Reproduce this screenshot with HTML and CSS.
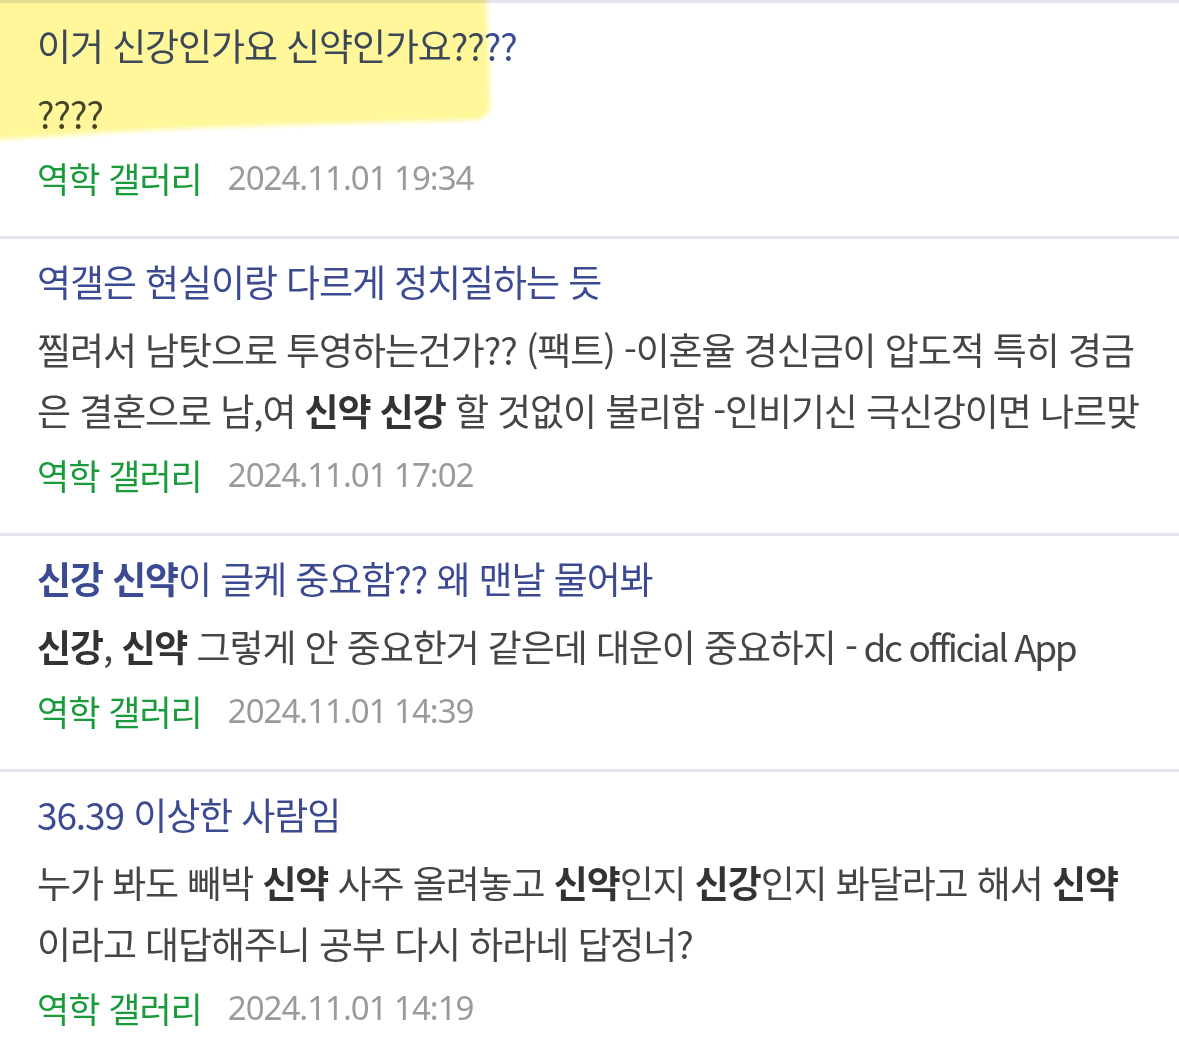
FILE: index.html
```html
<!DOCTYPE html>
<html lang="ko">
<head>
<meta charset="utf-8">
<title>검색 결과</title>
<link rel="stylesheet" href="styles.css">
</head>
<body>
<ul class="list">
  <li class="item">
    <div class="title">이거 신강인가요 신약인가요????</div>
    <div class="body">????</div>
    <div class="meta"><span class="gall">역학 갤러리</span><span class="date">2024.11.01 19:34</span></div>
  </li>
  <li class="item">
    <div class="title">역갤은 현실이랑 다르게 정치질하는 듯</div>
    <div class="body">찔려서 남탓으로 투영하는건가?? (팩트) -이혼율 경신금이 압도적 특히 경금<br>은 결혼으로 남,여 <b>신약 신강</b> 할 것없이 불리함 -인비기신 극신강이면 나르맞</div>
    <div class="meta"><span class="gall">역학 갤러리</span><span class="date">2024.11.01 17:02</span></div>
  </li>
  <li class="item">
    <div class="title"><b>신강 신약</b>이 글케 중요함?? 왜 맨날 물어봐</div>
    <div class="body"><b>신강</b>, <b>신약</b> 그렇게 안 중요한거 같은데 대운이 중요하지 <span class="latin">- dc official App</span></div>
    <div class="meta"><span class="gall">역학 갤러리</span><span class="date">2024.11.01 14:39</span></div>
  </li>
  <li class="item">
    <div class="title">36.39 이상한 사람임</div>
    <div class="body">누가 봐도 빼박 <b>신약</b> 사주 올려놓고 <b>신약</b>인지 <b>신강</b>인지 봐달라고 해서 <b>신약</b><br>이라고 대답해주니 공부 다시 하라네 답정너?</div>
    <div class="meta"><span class="gall">역학 갤러리</span><span class="date">2024.11.01 14:19</span></div>
  </li>
  <li class="marker" aria-hidden="true">
    <svg width="520" height="170" viewBox="0 0 520 170">
      <defs><filter id="soft" x="-10%" y="-10%" width="120%" height="130%"><feGaussianBlur stdDeviation="2.5"/></filter></defs>
      <path d="M-10,-10 L486,-10 L489,60 L490,104 Q490,118 474,120 L330,124 Q200,127 120,132 L-10,140 Z" fill="#fff799" filter="url(#soft)"/>
    </svg>
  </li>
</ul>
</body>
</html>
```

FILE: styles.css
```css
html, body {
  margin: 0;
  padding: 0;
  background: #ffffff;
}
body {
  font-family: "Noto Sans CJK KR", "Noto Sans", sans-serif;
  width: 1179px;
  overflow: hidden;
}
.list {
  list-style: none;
  margin: 0;
  padding: 0;
  position: relative;
  border-top: 3px solid #e1e3f0;
}
.item {
  border-bottom: 3px solid #e1e3f0;
  padding: 12px 37px 28px 37px;
}
.title {
  font-size: 37px;
  line-height: 61px;
  letter-spacing: -1.1px;
  color: #3c4993;
  white-space: nowrap;
}
.title b { font-weight: 700; }
.body {
  margin-top: 7px;
  font-size: 37px;
  line-height: 61px;
  letter-spacing: -1.1px;
  color: #454545;
  white-space: nowrap;
}
.body b { font-weight: 700; color: #333333; }
.latin { letter-spacing: -2.4px; }
.meta {
  margin-top: 3px;
  line-height: 61px;
  display: flex;
  gap: 26px;
  white-space: nowrap;
}
.gall {
  font-size: 35px;
  letter-spacing: -1px;
  color: #1a9b3b;
}
.date {
  font-family: "Noto Sans", "Noto Sans CJK KR", sans-serif;
  font-size: 33px;
  letter-spacing: -1px;
  color: #9a9a9a;
}
.marker {
  position: absolute;
  left: 0;
  top: -3px;
  pointer-events: none;
  mix-blend-mode: multiply;
}
.marker svg { display: block; }
```
